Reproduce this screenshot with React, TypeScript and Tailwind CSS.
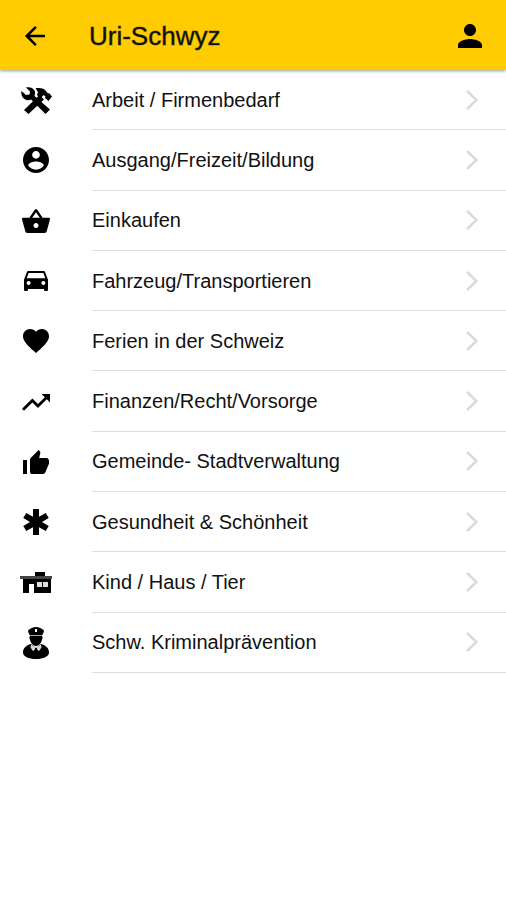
import type { ReactNode } from "react";
import {
  IoMdArrowBack,
  IoMdBasket,
  IoMdCar,
  IoMdContact,
  IoMdHeart,
  IoMdMedical,
  IoMdPerson,
  IoMdThumbsUp,
  IoMdTrendingUp,
} from "react-icons/io";

const ToolsIcon = () => (
  <svg viewBox="0 0 31 27" className="w-[31px]" fill="currentColor" aria-hidden="true">
    {/* hammer */}
    <path d="M3 23L18.500 8l4.500 4.500L7.500 27z" />
    <path d="M14.500 1.500C18 .5 22 1 24.500 3.500L27 6.500l1-.5 3 3.500-3.500 4.500-3.500-3 .5-1.500-2-1.500-3 3.500-3.500-3.500 1-3z" />
    {/* wrench */}
    <path d="M5 .5C8-.5 12 .5 13.500 3.500c1 2 .5 4 0 5.500L29 22.500 24.500 27 10 12.500c-2 1-4.500 1-6.500-.5C.5 10 0 6.500.5 4l4.500 4 3.500-.5L9 4.500z" />
  </svg>
);

const HouseIcon = () => (
  <svg viewBox="0 0 32 22" className="w-8" fill="currentColor" aria-hidden="true">
    <path d="M15 0h10v5H15z" />
    <path d="M0 4h32v3H0z" fill="#444" />
    <path d="M3 7h28v14H14V12H9v9H3z" />
    <path d="M17 10h5v5h-5zM23 10h5v5h-5z" fill="#ddd" />
  </svg>
);

const PoliceIcon = () => (
  <svg viewBox="0 0 26 32" className="w-[26px]" fill="currentColor" aria-hidden="true">
    <path d="M13 0c3 0 5.500 1.500 8 3.500-.3 2-1 3.500-2 5H7c-1-1.500-1.700-3-2-5C7.500 1.500 10 0 13 0z" />
    <path d="M7 9h12c.8 1 .8 2.500 0 3.500-.5 3.500-3 6.500-6 6.500s-5.500-3-6-6.500C6.200 11.500 6.200 10 7 9z" />
    <path d="M8 17l5 4 5-4c5 1.500 8 4 8 8.500 0 4-5.500 6.500-13 6.500S0 29.500 0 25.500C0 21 3 18.500 8 17z" />
    <path d="M8 17.500l5 3.500 5-3.500.5 3-2.500 3.500-3-2-3 2-2.500-3.500z" fill="#ddd" />
    <path d="M12 21h2l1 7h-4z" />
    <path d="M12 2h2v3h-2z" fill="#fff" />
    <path d="M8 8h10v1H8z" fill="#aaa" />
  </svg>
);

const categories: { name: string; icon: ReactNode }[] = [
  { name: "Arbeit / Firmenbedarf", icon: <ToolsIcon /> },
  { name: "Ausgang/Freizeit/Bildung", icon: <IoMdContact size={32} /> },
  { name: "Einkaufen", icon: <IoMdBasket size={32} /> },
  { name: "Fahrzeug/Transportieren", icon: <IoMdCar size={32} /> },
  { name: "Ferien in der Schweiz", icon: <IoMdHeart size={32} /> },
  { name: "Finanzen/Recht/Vorsorge", icon: <IoMdTrendingUp size={32} /> },
  { name: "Gemeinde- Stadtverwaltung", icon: <IoMdThumbsUp size={32} /> },
  { name: "Gesundheit & Schönheit", icon: <IoMdMedical size={32} /> },
  { name: "Kind / Haus / Tier", icon: <HouseIcon /> },
  { name: "Schw. Kriminalprävention", icon: <PoliceIcon /> },
];

export default function App() {
  return (
    <div className="min-h-screen bg-white font-['Liberation_Sans',Arial,sans-serif] text-[#111]">
      {/* Top bar */}
      <header className="relative flex h-[70px] items-center bg-[#fecc00] px-5 pt-0.5 shadow-[0_1px_3px_rgba(0,0,0,0.4)]">
        <button type="button" aria-label="Zurück" className="flex w-[69px] text-black">
          <IoMdArrowBack size={30} />
        </button>
        <h1 className="flex-1 text-[26px] leading-8 [-webkit-text-stroke:1px_rgba(17,17,17,0.4)]">
          Uri-Schwyz
        </h1>
        <button type="button" aria-label="Profil" className="text-black">
          <IoMdPerson size={32} />
        </button>
      </header>

      {/* Categories */}
      <ul className="grid min-h-[603px] auto-rows-fr">
        {categories.map((category) => (
          <li key={category.name}>
            <a href="#" className="flex h-full items-center">
              <span className="flex w-[72px] justify-center text-black">
                {category.icon}
              </span>
              <span className="ml-5 flex flex-1 items-center self-stretch border-b border-[#dedede] pr-7">
                <span className="flex-1 text-[20px] leading-6">
                  {category.name}
                </span>
                <svg
                  viewBox="0 0 12 20"
                  className="w-3"
                  fill="none"
                  stroke="#dadada"
                  strokeWidth="2.500"
                  aria-hidden="true"
                >
                  <path d="M1 1l9.500 9L1 19" />
                </svg>
              </span>
            </a>
          </li>
        ))}
      </ul>
    </div>
  );
}
